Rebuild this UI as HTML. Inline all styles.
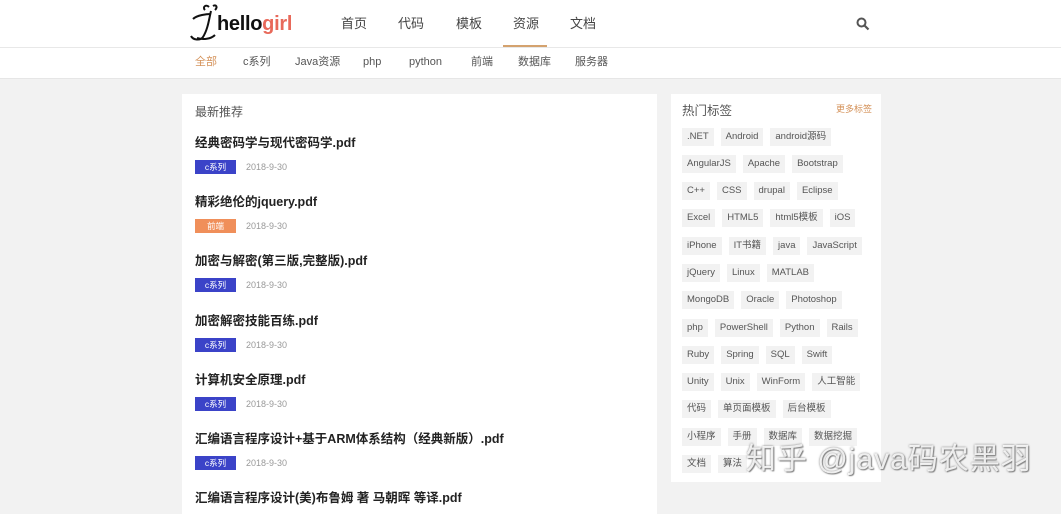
<!DOCTYPE html>
<html><head><meta charset="utf-8"><style>
*{margin:0;padding:0;box-sizing:border-box}
body{width:1061px;height:500px;overflow:hidden;background:#f2f2f2;font-family:"Liberation Sans","Noto Sans CJK SC",sans-serif;position:relative}
.hdr{position:absolute;left:0;top:0;width:1061px;height:48px;background:#fff;border-bottom:1px solid #e8e8e8}
.sub{position:absolute;left:0;top:48px;width:1061px;height:31px;background:#fff;border-bottom:1px solid #e6e6e6}
.a{position:absolute;font-size:13px;color:#444;white-space:nowrap}
.s{position:absolute;font-size:11px;color:#555;white-space:nowrap;top:54px;height:16px;line-height:16px}
.card{position:absolute;background:#fff}
.t{position:absolute;left:195px;font-size:12.5px;font-weight:bold;color:#222;white-space:nowrap}
.b{position:absolute;left:195px;width:41px;height:14px;color:#fff;font-size:8.5px;line-height:14px;text-align:center}
.d{position:absolute;left:246px;font-size:9px;color:#999}
.row{position:absolute;left:682px;display:flex;gap:7px}
.row span{background:#f2f2f2;color:#555;font-size:9.5px;height:18px;line-height:18px;padding:0 5px;white-space:nowrap}
</style></head><body>
<div class="hdr"></div>
<svg style="position:absolute;left:187px;top:3px" width="46" height="40" viewBox="0 0 46 40"><path d="M22 4c-3-3-7 0-4 3M26 3c3-2 5 1 2 4M24 8c-2 8-3 18-8 26c-3 4-10 3-12-1M6 16c4-4 14-5 18-5M10 35c6 2 14 1 18-3" fill="none" stroke="#111" stroke-width="2"/></svg>
<div class="a" style="left:217px;top:13px;font-size:20px;font-weight:bold;color:#111;letter-spacing:-0.3px">hello<span style="color:#e8695a">girl</span></div>
<div class="a" style="left:341px;top:13px">首页</div>
<div class="a" style="left:398px;top:13px">代码</div>
<div class="a" style="left:456px;top:13px">模板</div>
<div class="a" style="left:513px;top:13px">资源</div>
<div style="position:absolute;left:503px;top:45px;width:44px;height:2px;background:#d4a26e"></div>
<div class="a" style="left:570px;top:13px">文档</div>
<svg style="position:absolute;left:856px;top:17px" width="14" height="14" viewBox="0 0 14 14"><circle cx="5.5" cy="5.5" r="4" fill="none" stroke="#555" stroke-width="2"/><path d="M8.5 8.5L12.5 12.5" stroke="#555" stroke-width="2.2"/></svg>
<div class="sub"></div>
<div class="s" style="left:195px;color:#d4925a">全部</div>
<div class="s" style="left:243px">c系列</div>
<div class="s" style="left:295px">Java资源</div>
<div class="s" style="left:363px">php</div>
<div class="s" style="left:409px">python</div>
<div class="s" style="left:471px">前端</div>
<div class="s" style="left:518px">数据库</div>
<div class="s" style="left:575px">服务器</div>

<div class="card" style="left:182px;top:94px;width:475px;height:420px"></div>
<div class="a" style="left:195px;top:103px;font-size:12px;color:#555">最新推荐</div>
<div class="t" style="top:132px">经典密码学与现代密码学.pdf</div>
<div class="b" style="top:160px;background:#3b43c8">c系列</div><div class="d" style="top:162px">2018-9-30</div>
<div class="t" style="top:191px">精彩绝伦的jquery.pdf</div>
<div class="b" style="top:219px;background:#f08f5a">前端</div><div class="d" style="top:221px">2018-9-30</div>
<div class="t" style="top:250px">加密与解密(第三版,完整版).pdf</div>
<div class="b" style="top:278px;background:#3b43c8">c系列</div><div class="d" style="top:280px">2018-9-30</div>
<div class="t" style="top:310px">加密解密技能百练.pdf</div>
<div class="b" style="top:338px;background:#3b43c8">c系列</div><div class="d" style="top:340px">2018-9-30</div>
<div class="t" style="top:369px">计算机安全原理.pdf</div>
<div class="b" style="top:397px;background:#3b43c8">c系列</div><div class="d" style="top:399px">2018-9-30</div>
<div class="t" style="top:428px">汇编语言程序设计+基于ARM体系结构（经典新版）.pdf</div>
<div class="b" style="top:456px;background:#3b43c8">c系列</div><div class="d" style="top:458px">2018-9-30</div>
<div class="t" style="top:487px">汇编语言程序设计(美)布鲁姆 著 马朝晖 等译.pdf</div>

<div class="card" style="left:671px;top:94px;width:210px;height:388px"></div>
<div class="a" style="left:682px;top:100px;font-size:12.5px;color:#555">热门标签</div>
<div class="a" style="left:836px;top:102px;font-size:9px;color:#d4925a">更多标签</div>
<div class="row" style="top:128px"><span>.NET</span><span>Android</span><span>android源码</span></div>
<div class="row" style="top:155px"><span>AngularJS</span><span>Apache</span><span>Bootstrap</span></div>
<div class="row" style="top:182px"><span>C++</span><span>CSS</span><span>drupal</span><span>Eclipse</span></div>
<div class="row" style="top:209px"><span>Excel</span><span>HTML5</span><span>html5模板</span><span>iOS</span></div>
<div class="row" style="top:237px"><span>iPhone</span><span>IT书籍</span><span>java</span><span>JavaScript</span></div>
<div class="row" style="top:264px"><span>jQuery</span><span>Linux</span><span>MATLAB</span></div>
<div class="row" style="top:291px"><span>MongoDB</span><span>Oracle</span><span>Photoshop</span></div>
<div class="row" style="top:319px"><span>php</span><span>PowerShell</span><span>Python</span><span>Rails</span></div>
<div class="row" style="top:346px"><span>Ruby</span><span>Spring</span><span>SQL</span><span>Swift</span></div>
<div class="row" style="top:373px"><span>Unity</span><span>Unix</span><span>WinForm</span><span>人工智能</span></div>
<div class="row" style="top:400px"><span>代码</span><span>单页面模板</span><span>后台模板</span></div>
<div class="row" style="top:428px"><span>小程序</span><span>手册</span><span>数据库</span><span>数据挖掘</span></div>
<div class="row" style="top:455px"><span>文档</span><span>算法</span></div>
<div class="a" style="left:746px;top:434px;font-size:30px;letter-spacing:1px;color:rgba(255,255,255,0.85);text-shadow:0 0 2px #777,1px 1px 1px #888">知乎 @java码农黑羽</div>
</body></html>
